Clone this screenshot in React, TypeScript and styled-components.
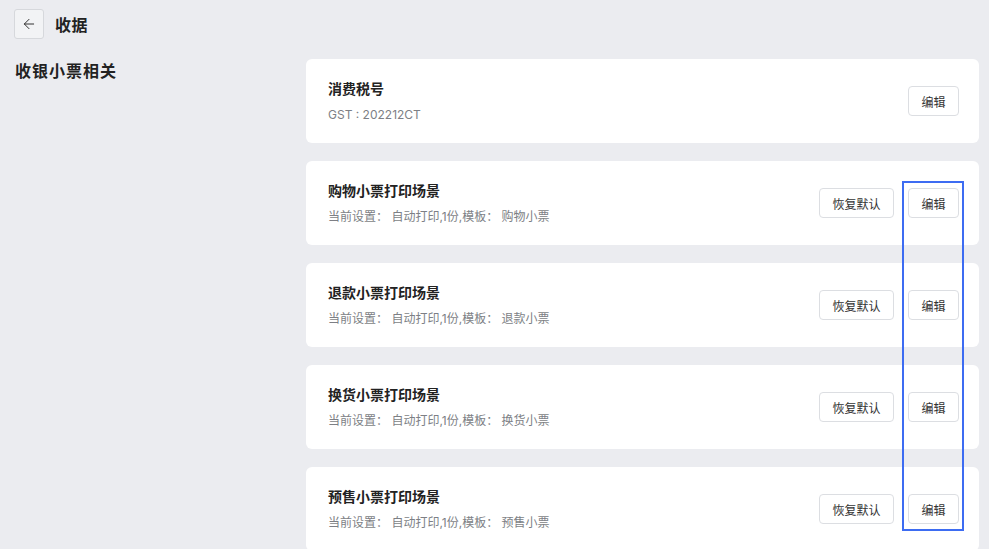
import React from "react";
import styled, {createGlobalStyle} from "styled-components";
import {ArrowLeft} from "lucide-react";

const GlobalStyle = createGlobalStyle`
    html, body {
        margin: 0;
        padding: 0;
        background: #ebecf0;
        overflow: hidden;
    }
    body {
        font-family: "Inter", "Noto Sans CJK SC", sans-serif;
        color: #1f1f1f;
    }
`;

const Page = styled.div`
    width: 989px;
    height: 549px;
    overflow: hidden;
`;

const Header = styled.div`
    display: flex;
    align-items: center;
    gap: 11px;
    padding: 9px 14px 0;
    height: 30px;
`;

const BackButton = styled.button`
    width: 30px;
    height: 30px;
    box-sizing: border-box;
    display: flex;
    align-items: center;
    justify-content: center;
    padding: 0;
    background: #f2f3f5;
    border: 1px solid #d6d8dc;
    border-radius: 3px;
    color: #333;
`;

const PageTitle = styled.h1`
    margin: 0;
    font-size: 16px;
    font-weight: 600;
    color: #222;
    letter-spacing: 0.5px;
`;

const Body = styled.div`
    display: flex;
    margin-top: 20px;
`;

const SectionTitle = styled.h2`
    width: 291px;
    margin: 0;
    padding: 1px 0 0 15px;
    font-size: 16px;
    line-height: 22px;
    font-weight: 600;
    color: #222;
    letter-spacing: 1px;
`;

const CardList = styled.div`
    position: relative;
    width: 673px;
    display: flex;
    flex-direction: column;
    gap: 18px;
`;

const Card = styled.div`
    height: 84px;
    box-sizing: border-box;
    display: flex;
    align-items: center;
    justify-content: space-between;
    padding: 0 20px 0 22px;
    background: #fff;
    border-radius: 6px;
`;

const CardText = styled.div`
    display: flex;
    flex-direction: column;
    gap: 7px;
    padding-top: 1px;
`;

const CardTitle = styled.div`
    font-size: 14px;
    line-height: 20px;
    font-weight: 600;
    color: #222;
`;

const CardSub = styled.div`
    font-size: 12px;
    line-height: 18px;
    color: #7d7f85;
`;

const Actions = styled.div`
    display: flex;
    gap: 14px;
`;

const Button = styled.button<{ $wide?: boolean }>`
    width: ${p => (p.$wide ? "75px" : "51px")};
    height: 30px;
    box-sizing: border-box;
    padding: 0;
    background: #fff;
    border: 1px solid #dcdee2;
    border-radius: 4px;
    font-family: "Inter", "Noto Sans CJK SC", sans-serif;
    font-size: 12px;
    color: #333;
`;

const Highlight = styled.div`
    position: absolute;
    left: 596px;
    top: 122px;
    width: 62px;
    height: 350px;
    box-sizing: border-box;
    border: 2px solid #3d6cf2;
    pointer-events: none;
`;

interface Row {
    title: string;
    sub: string;
    reset: boolean;
}

const rows: Row[] = [
    {title: "消费税号", sub: "GST : 202212CT", reset: false},
    {title: "购物小票打印场景", sub: "当前设置： 自动打印,1份,模板： 购物小票", reset: true},
    {title: "退款小票打印场景", sub: "当前设置： 自动打印,1份,模板： 退款小票", reset: true},
    {title: "换货小票打印场景", sub: "当前设置： 自动打印,1份,模板： 换货小票", reset: true},
    {title: "预售小票打印场景", sub: "当前设置： 自动打印,1份,模板： 预售小票", reset: true},
];

export default function App() {
    return (
        <Page>
            <GlobalStyle/>
            <Header>
                <BackButton>
                    <ArrowLeft size={16} strokeWidth={1.5}/>
                </BackButton>
                <PageTitle>收据</PageTitle>
            </Header>
            <Body>
                <SectionTitle>收银小票相关</SectionTitle>
                <CardList>
                    {rows.map(r => (
                        <Card key={r.title}>
                            <CardText>
                                <CardTitle>{r.title}</CardTitle>
                                <CardSub>{r.sub}</CardSub>
                            </CardText>
                            <Actions>
                                {r.reset && <Button $wide>恢复默认</Button>}
                                <Button>编辑</Button>
                            </Actions>
                        </Card>
                    ))}
                    <Highlight/>
                </CardList>
            </Body>
        </Page>
    );
}
